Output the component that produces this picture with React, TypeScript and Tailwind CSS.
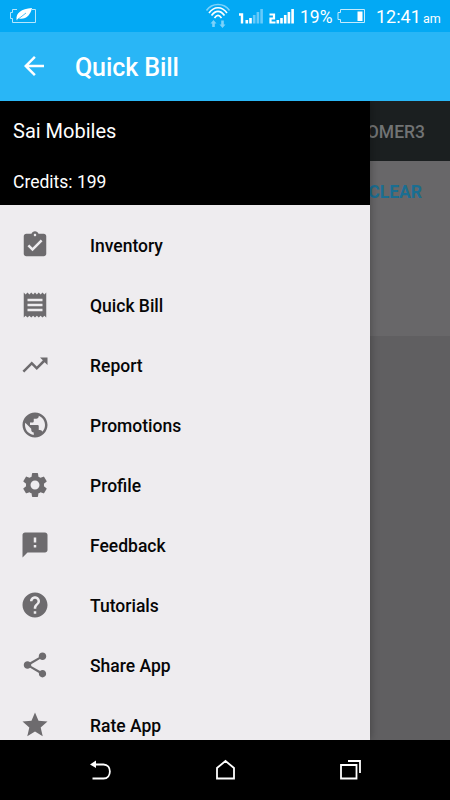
import React from "react";
import type { IconType } from "react-icons";
import {
  MdArrowBack,
  MdAssignmentTurnedIn,
  MdFeedback,
  MdHelp,
  MdPublic,
  MdReceipt,
  MdSettings,
  MdShare,
  MdStar,
  MdTrendingUp,
} from "react-icons/md";

const MENU_ITEMS: { label: string; icon: IconType }[] = [
  { label: "Inventory", icon: MdAssignmentTurnedIn },
  { label: "Quick Bill", icon: MdReceipt },
  { label: "Report", icon: MdTrendingUp },
  { label: "Promotions", icon: MdPublic },
  { label: "Profile", icon: MdSettings },
  { label: "Feedback", icon: MdFeedback },
  { label: "Tutorials", icon: MdHelp },
  { label: "Share App", icon: MdShare },
  { label: "Rate App", icon: MdStar },
];

const PowerSaverIcon = () => (
  <svg className="ml-[9px] h-4 w-7" viewBox="0 0 28 16" fill="none">
    <path d="M8 1.5H3.5V4.5H1.5V10.5H3.5V14.5H26.5V1.5H23" stroke="#b5e6fd" />
    <path d="M7.5 11.5C7 5 12 1 23 0C21.5 7 17 12 9.5 10.5L8 12.5Z" fill="white" />
    <path d="M8 12L17 5" stroke="#03a9f4" strokeWidth="0.7" />
  </svg>
);

const WifiIcon = () => (
  <svg className="h-[26px] w-[26px]" viewBox="0 0 26 26" fill="none">
    <path d="M1.5 7.5C7 -0.500 19 -0.500 24.5 7.5" stroke="#7dd2fa" strokeWidth="1.5" />
    <path d="M4 10C9 3 17 3 22 10" stroke="white" strokeWidth="1.6" />
    <path d="M6.5 12.5C10.5 7 15.5 7 19.5 12.5" stroke="white" strokeWidth="1.6" />
    <path d="M9.5 15C12 11.500 14 11.500 16.5 15" stroke="white" strokeWidth="1.6" />
    <path d="M8.5 17L11.5 20.5H9.8V24H7.2V20.5H5.500Z" fill="#7dd2fa" transform="rotate(0)" />
    <path d="M17.5 25L14.5 21.5H16.2V17.5H18.8V21.5H20.5Z" fill="#7dd2fa" />
  </svg>
);

const SignalIcon = ({ sim, level }: { sim: number; level: number }) => (
  <svg className="h-4 w-[26px]" viewBox="0 0 26 16">
    {sim === 1 ? (
      <path d="M1 6.5H4V15.5" fill="none" stroke="white" strokeWidth="2.4" />
    ) : (
      <path d="M0.5 6.5H5V10.5H1.500V14.500H6.500" fill="none" stroke="white" strokeWidth="2.2" />
    )}
    {[12, 10, 7, 4, 1].map((y, i) => (
      <rect
        key={y}
        x={7.5 + i * 3.7}
        y={y}
        width="2.6"
        height={15.5 - y}
        fill={i < level ? "white" : "#68cafa"}
      />
    ))}
  </svg>
);

const BatteryIcon = () => (
  <svg className="h-4 w-[29px]" viewBox="0 0 29 16" fill="none">
    <path d="M3.5 1.5H27.5V14.5H3.5V11.5H1V4.5H3.5Z" stroke="#c4ebfd" />
    <rect x="20.5" y="3.5" width="5" height="9.5" fill="white" />
  </svg>
);

const StatusBar = () => (
  <div className="flex h-8 shrink-0 items-center bg-[#03a9f4] text-white">
    <PowerSaverIcon />
    <div className="ml-auto flex h-full items-center">
      <WifiIcon />
      <div className="ml-[7px] flex gap-[5px]">
        <SignalIcon sim={1} level={2} />
        <SignalIcon sim={2} level={5} />
      </div>
      <span className="mt-0.5 ml-[5px] w-[33px] text-[17.5px] whitespace-nowrap">19%</span>
      <div className="ml-1">
        <BatteryIcon />
      </div>
      <span className="ml-[10px] w-[43px] text-[18px] whitespace-nowrap">12:41</span>
      <span className="mt-1.5 mr-[10px] ml-1 w-[17px] text-[12.5px] whitespace-nowrap">am</span>
    </div>
  </div>
);

const Drawer = () => (
  <aside className="z-10 flex h-full w-[370px] shrink-0 flex-col overflow-hidden bg-[#eeecef] shadow-[1px_0_8px_rgba(0,0,0,0.28)]">
    <div className="h-[104px] shrink-0 bg-black px-[13px] text-white">
      <p className="pt-[15px] text-[20px] leading-[30px]">Sai Mobiles</p>
      <p className="pt-[23px] text-[17.5px] leading-[26px]">Credits: 199</p>
    </div>
    <nav className="pt-[10px]">
      {MENU_ITEMS.map(({ label, icon: Icon }) => (
        <a key={label} href="#" className="flex h-[60px] items-center pl-5">
          <Icon className="size-[30px] shrink-0 text-[#6d6b6e]" />
          <span className="ml-10 pt-0.5 text-[17.5px] font-medium text-[#060607]">{label}</span>
        </a>
      ))}
    </nav>
  </aside>
);

// Billing screen, dimmed while the drawer is open
const BillingScreen = () => (
  <div className="flex min-w-0 flex-1 flex-col bg-[#605f61]">
    <div className="flex h-[60px] items-center justify-end bg-[#1b1f20] pt-0.5 pr-[25px] text-[17.5px] font-medium text-[#717374]">
      CUSTOMER3
    </div>
    <div className="flex h-[175px] items-start justify-end bg-[#686769] pt-[18px] pr-[28px] text-[17.5px] leading-[26px] font-bold text-[#1a6e92]">
      CLEAR
    </div>
  </div>
);

const NavigationBar = () => (
  <div className="flex h-[60px] shrink-0 items-center justify-between bg-black px-[88px] text-white">
    <svg className="h-6 w-6" viewBox="0 0 24 24" fill="none">
      <path d="M7 6.5H15.5C24 6.5 24 20.5 15.5 20.5H4.5" stroke="currentColor" strokeWidth="1.8" />
      <path d="M2 6.5L8 2.5V10Z" fill="currentColor" />
    </svg>
    <svg className="h-6 w-6" viewBox="0 0 24 24" fill="none">
      <path d="M4 20.5V10L12.5 3L21 10V20.5Z" stroke="currentColor" strokeWidth="1.8" />
    </svg>
    <svg className="h-6 w-6" viewBox="0 0 24 24" fill="none">
      <path d="M3 7H18.5V20.5H3Z" stroke="currentColor" strokeWidth="1.8" />
      <path d="M10 3H22V15" stroke="currentColor" strokeWidth="1.8" />
    </svg>
  </div>
);

const App: React.FC = () => {
  return (
    <div className="flex h-[800px] w-[450px] flex-col overflow-hidden font-['Roboto',sans-serif]">
      <StatusBar />
      <header className="flex h-[69px] shrink-0 items-center bg-[#29b6f6] pl-[19px] text-white">
        <button className="mb-0.5 size-[30px]">
          <MdArrowBack className="size-[30px]" />
        </button>
        <h1 className="ml-[26px] pt-0.5 text-[25px] font-medium tracking-[-0.1px]">Quick Bill</h1>
      </header>
      <main className="flex min-h-0 flex-1 overflow-hidden">
        <Drawer />
        <BillingScreen />
      </main>
      <NavigationBar />
    </div>
  );
};

export default App;
